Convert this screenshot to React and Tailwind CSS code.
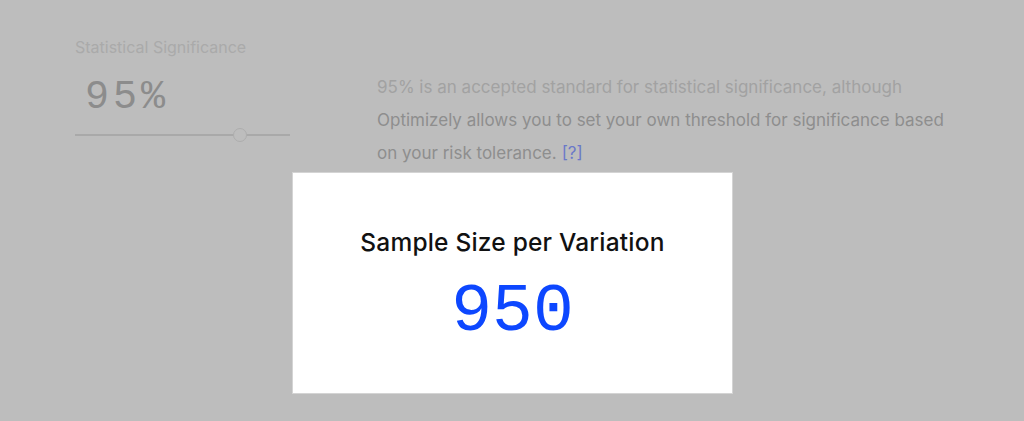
export default function App() {
    return (
        <div className="relative w-[1024px] h-[421px] overflow-hidden bg-[#bdbdbd] font-['Inter',sans-serif]">
            {/* faded settings row behind the overlay */}
            <div className="flex pt-[37px] pl-[75px]">
                <div className="w-[215px] flex flex-col">
                    <div className="text-[16px] leading-[20px] text-[#aaaaaa]">Statistical Significance</div>
                    <div className="mt-[19px] ml-[10px] text-[40px] leading-[44px] tracking-[4px] text-[#8c8c8c] font-['Liberation_Mono',monospace]">95%</div>
                    <div className="relative mt-[8px] h-[14px] flex items-center">
                        <div className="w-full h-[2px] bg-[#a9a9a9]" />
                        <div className="absolute left-[158px] top-0 w-[14px] h-[14px] rounded-full bg-[#bdbdbd] border border-[#adadad]" />
                    </div>
                </div>
                <div className="ml-[87px] mt-[34px] flex flex-col text-[17px] leading-[33px] text-[#8e8e8e]">
                    <div className="text-[#a2a2a2]">95% is an accepted standard for statistical significance, although</div>
                    <div>Optimizely allows you to set your own threshold for significance based</div>
                    <div className="flex gap-[5px]">
                        <span>on your risk tolerance.</span>
                        <span className="text-[#6a78c9]">[?]</span>
                    </div>
                </div>
            </div>

            {/* result card */}
            <div className="absolute left-[292px] top-[172px] w-[441px] h-[222px] bg-white border border-[#d4d4d4] flex flex-col items-center">
                <div className="mt-[54px] text-[24.5px] leading-[30px] font-medium tracking-[0.2px] text-[#111111]">Sample Size per Variation</div>
                <div className="mt-[20px] text-[68px] leading-[70px] text-[#0d47ff] font-['Liberation_Mono',monospace]">950</div>
            </div>
        </div>
    );
}
